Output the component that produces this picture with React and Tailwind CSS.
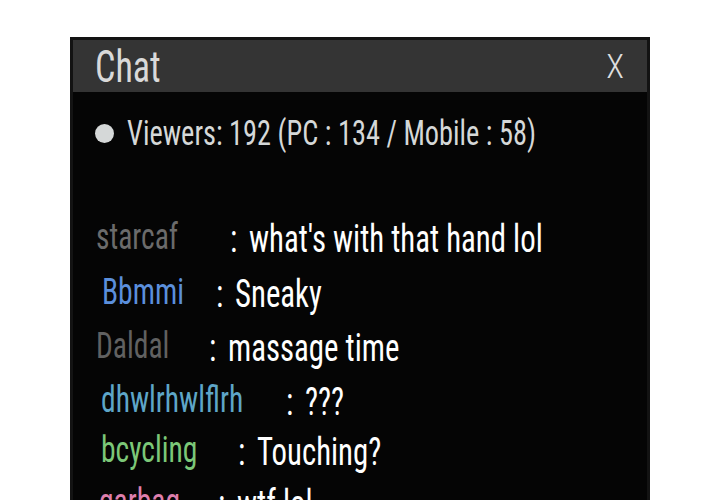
const rows = [
  { name: 'starcaf', color: 'text-[#6b6b6b]', ml: 'ml-[23px]', w: 'w-[134px]', mt: 'mt-[68px]', msg: "what's with that hand lol" },
  { name: 'Bbmmi', color: 'text-[#5b8fdc]', ml: 'ml-[29px]', w: 'w-[114px]', mt: 'mt-[15px]', msg: 'Sneaky' },
  { name: 'Daldal', color: 'text-[#616161]', ml: 'ml-[23px]', w: 'w-[113px]', mt: 'mt-[14px]', msg: 'massage time' },
  { name: 'dhwlrhwlflrh', color: 'text-[#5ea6c8]', ml: 'ml-[28px]', w: 'w-[185px]', mt: 'mt-[14px]', msg: '???' },
  { name: 'bcycling', color: 'text-[#7cc878]', ml: 'ml-[28px]', w: 'w-[137px]', mt: 'mt-[10px]', msg: 'Touching?' },
  { name: 'garbag', color: 'text-[#df7fad]', ml: 'ml-[26px]', w: 'w-[119px]', mt: 'mt-[12px]', msg: 'wtf lol' },
];

export default function App() {
  return (
    <div className="w-[720px] h-[500px] overflow-hidden bg-white pt-[37px] pl-[70px] font-['Roboto_Condensed',Roboto,sans-serif]">
      <div className="w-[580px] h-[500px] bg-[#050505] border-[3px] border-[#131313] flex flex-col">
        <div className="h-[52px] shrink-0 bg-[#343434] flex items-center justify-between pl-[22px] pr-[23px]">
          <span className="inline-block origin-left scale-x-[0.8] whitespace-nowrap text-[45px] leading-none text-[#d9d9d9]">Chat</span>
          <span className="inline-block text-[33px] leading-none font-light text-[#dedede]">X</span>
        </div>
        <div className="flex items-center pl-[22px] mt-[24px] text-[#d5d8d8]">
          <span className="w-[19px] h-[19px] shrink-0 rounded-full bg-[#d5d8d8]" />
          <span className="ml-[13px] inline-block origin-left scale-x-[0.81] whitespace-nowrap text-[35px] leading-none">
            Viewers: 192 (PC : 134 / Mobile : 58)
          </span>
        </div>
        {rows.map((r) => (
          <div key={r.name} className={`flex items-end shrink-0 ${r.mt} ${r.ml}`}>
            <span className={`flex ${r.w} shrink-0 mb-[4px] ${r.color}`}>
              <span className="block origin-left scale-x-[0.82] whitespace-nowrap text-[36px] leading-none">{r.name}</span>
            </span>
            <span className="flex w-[19px] shrink-0 text-white">
              <span className="block origin-left scale-x-[0.8] text-[39px] leading-none">:</span>
            </span>
            <span className="block origin-left scale-x-[0.79] whitespace-nowrap text-[39px] leading-none text-white">
              {r.msg}
            </span>
          </div>
        ))}
      </div>
    </div>
  );
}
